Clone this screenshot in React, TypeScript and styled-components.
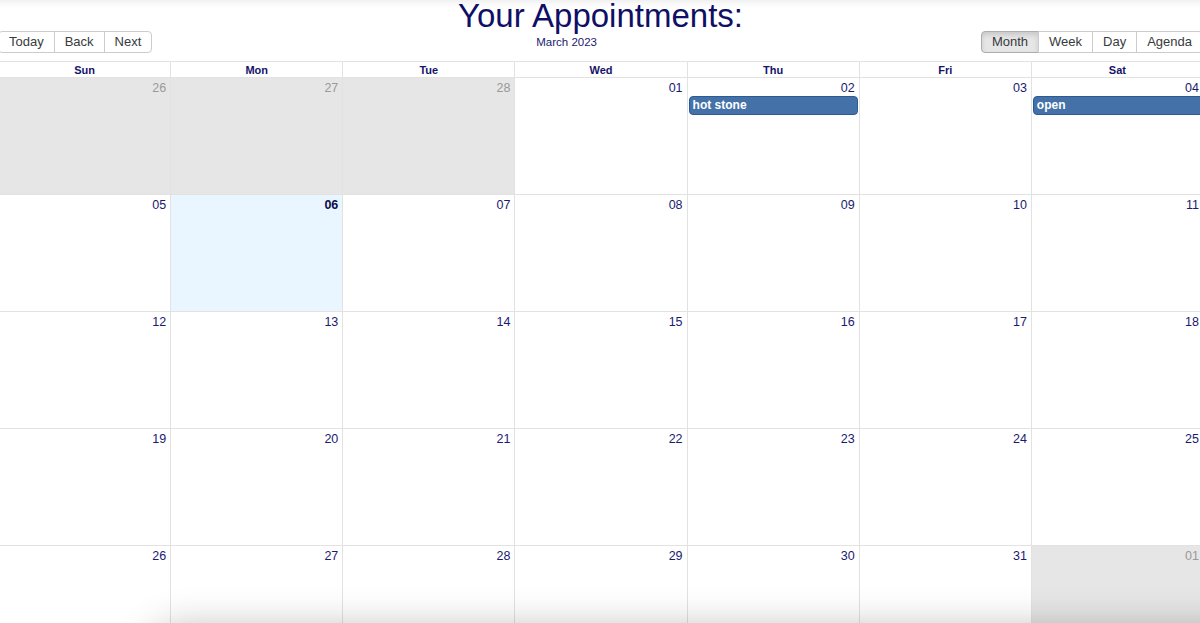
import React from "react";
import styled, { createGlobalStyle, css } from "styled-components";

const GlobalStyle = createGlobalStyle`
  html, body {
    margin: 0;
    padding: 0;
    background: #fff;
    overflow: hidden;
  }
  body {
    font-family: "Liberation Sans", Arial, Helvetica, sans-serif;
    color: #14146b;
  }
`;

const Page = styled.div`
  width: 1205px;
  margin-left: -2px;
`;

const TopShade = styled.div`
  position: fixed;
  top: -20px;
  left: -20px;
  right: -20px;
  height: 20px;
  box-shadow: 0 0 10px rgba(0, 0, 0, 0.12);
  z-index: 5;
`;

const BottomShade = styled.div`
  position: fixed;
  top: 630px;
  left: 150px;
  right: -60px;
  height: 60px;
  border-radius: 40px;
  box-shadow: 0 0 40px rgba(0, 0, 0, 0.3);
  z-index: 5;
`;

const Title = styled.h1`
  margin: 0;
  padding-top: 1px;
  text-align: center;
  font-size: 33px;
  font-weight: 400;
  line-height: 30px;
  color: #0f0f66;
`;

const Toolbar = styled.div`
  display: flex;
  align-items: center;
  margin: 0 0 8px;
`;

const ButtonGroup = styled.div`
  display: inline-flex;
`;

const ToolButton = styled.button<{ $active?: boolean }>`
  font-family: inherit;
  font-size: 13px;
  color: #373a3c;
  background: #fff;
  border: 1px solid #ccc;
  margin: 0;
  padding: 0 10px;
  height: 22px;
  line-height: 20px;
  cursor: pointer;
  &:not(:first-child) {
    margin-left: -1px;
  }
  &:first-child {
    border-radius: 4px 0 0 4px;
  }
  &:last-child {
    border-radius: 0 4px 4px 0;
  }
  ${(p) =>
    p.$active &&
    css`
      background: #e6e6e6;
      border-color: #adadad;
      box-shadow: inset 0 3px 5px rgba(0, 0, 0, 0.125);
    `}
`;

const Label = styled.span`
  flex: 1;
  text-align: center;
  font-size: 11.5px;
  color: #1a1a70;
`;

const MonthView = styled.div`
  border: 1px solid #e2e2e2;
  border-right: none;
`;

const HeaderRow = styled.div`
  display: flex;
  border-bottom: 1px solid #e2e2e2;
`;

const HeaderCell = styled.div`
  flex: 1;
  height: 15px;
  line-height: 16px;
  text-align: center;
  font-size: 11px;
  font-weight: 700;
  color: #14146b;
  & + & {
    border-left: 1px solid #e2e2e2;
  }
`;

const WeekRow = styled.div`
  display: flex;
  height: 116px;
  & + & {
    border-top: 1px solid #e2e2e2;
  }
`;

const DayCell = styled.div<{ $off?: boolean; $today?: boolean }>`
  flex: 1;
  min-width: 0;
  display: flex;
  flex-direction: column;
  background: ${(p) => (p.$off ? "#e6e6e6" : p.$today ? "#eaf6ff" : "#fff")};
  & + & {
    border-left: 1px solid #e2e2e2;
  }
`;

const DateNum = styled.div<{ $off?: boolean; $today?: boolean }>`
  text-align: right;
  padding: 3px 4px 0 0;
  height: 14px;
  line-height: 14px;
  font-size: 12.5px;
  font-weight: ${(p) => (p.$today ? 700 : 400)};
  color: ${(p) => (p.$off ? "#999" : p.$today ? "#0b0b4d" : "#1a1a70")};
`;

const Event = styled.div<{ $open?: boolean }>`
  margin: 1px ${(p) => (p.$open ? "-4px" : "1px")} 0 1px;
  padding: 2px 3px;
  height: 13px;
  line-height: 13px;
  font-size: 12px;
  font-weight: 700;
  color: #fff;
  background: #4472a8;
  border: 1px solid #2c5b93;
  border-radius: 4px;
  white-space: nowrap;
  overflow: hidden;
`;

type Day = { n: number; off?: boolean; today?: boolean; event?: string };

const pad = (n: number) => (n < 10 ? `0${n}` : `${n}`);

const weeks: Day[][] = [
  [
    { n: 26, off: true },
    { n: 27, off: true },
    { n: 28, off: true },
    { n: 1 },
    { n: 2, event: "hot stone" },
    { n: 3 },
    { n: 4, event: "open" },
  ],
  [5, 6, 7, 8, 9, 10, 11].map((n) => ({ n, today: n === 6 })),
  [12, 13, 14, 15, 16, 17, 18].map((n) => ({ n })),
  [19, 20, 21, 22, 23, 24, 25].map((n) => ({ n })),
  [26, 27, 28, 29, 30, 31].map((n) => ({ n } as Day)).concat([{ n: 1, off: true }]),
];

const dayNames = ["Sun", "Mon", "Tue", "Wed", "Thu", "Fri", "Sat"];

export default function App() {
  return (
    <>
      <GlobalStyle />
      <TopShade />
      <BottomShade />
      <Page>
        <Title>Your Appointments:</Title>
        <Toolbar>
          <ButtonGroup>
            <ToolButton>Today</ToolButton>
            <ToolButton>Back</ToolButton>
            <ToolButton>Next</ToolButton>
          </ButtonGroup>
          <Label>March 2023</Label>
          <ButtonGroup>
            <ToolButton $active>Month</ToolButton>
            <ToolButton>Week</ToolButton>
            <ToolButton>Day</ToolButton>
            <ToolButton>Agenda</ToolButton>
          </ButtonGroup>
        </Toolbar>
        <MonthView>
          <HeaderRow>
            {dayNames.map((d) => (
              <HeaderCell key={d}>{d}</HeaderCell>
            ))}
          </HeaderRow>
          {weeks.map((week, wi) => (
            <WeekRow key={wi}>
              {week.map((day, di) => (
                <DayCell key={di} $off={day.off} $today={day.today}>
                  <DateNum $off={day.off} $today={day.today}>
                    {pad(day.n)}
                  </DateNum>
                  {day.event && (
                    <Event $open={di === 6}>{day.event}</Event>
                  )}
                </DayCell>
              ))}
            </WeekRow>
          ))}
        </MonthView>
      </Page>
    </>
  );
}
